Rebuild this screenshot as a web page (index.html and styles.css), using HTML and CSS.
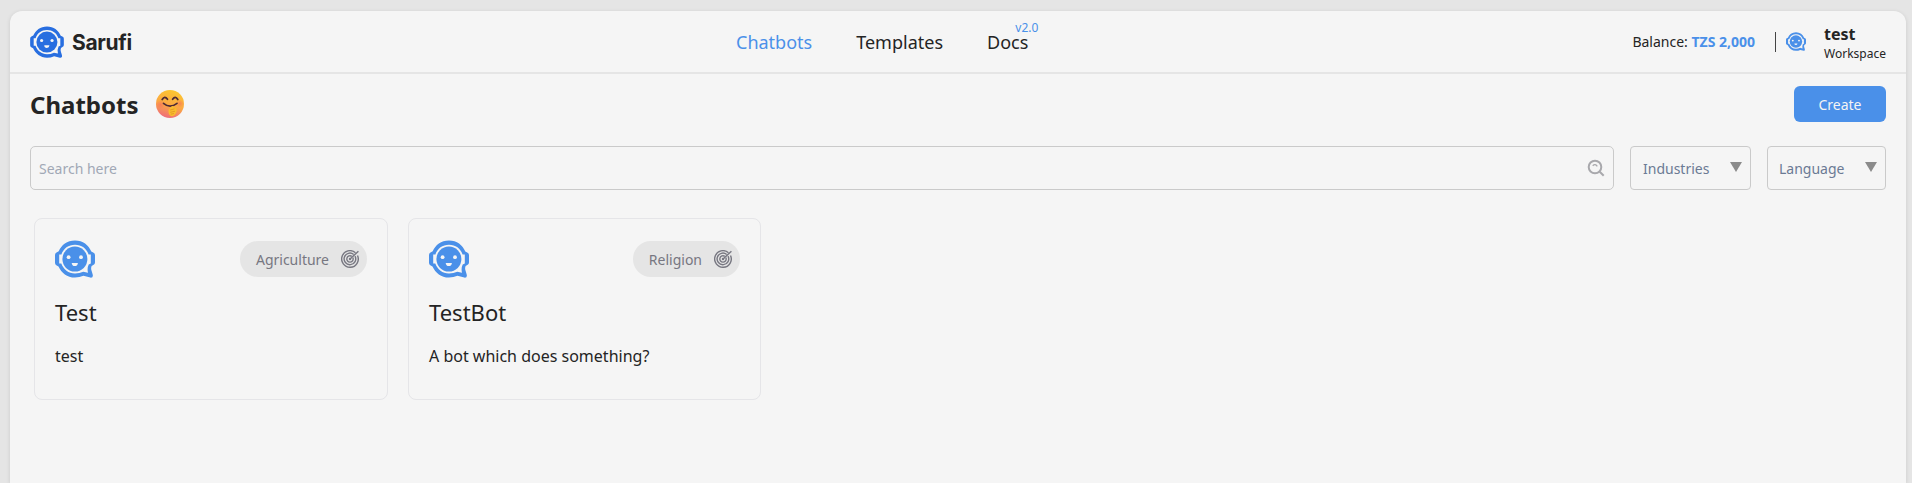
FILE: index.html
```
<!DOCTYPE html>
<html lang="en">
<head>
<meta charset="utf-8">
<title>Sarufi</title>
<link rel="stylesheet" href="styles.css">
</head>
<body>
<svg class="defs" aria-hidden="true">
  <symbol id="bot" viewBox="0 0 40 38">
    <path fill="currentColor" d="M20 .5C28 .5 33.500 5 36.300 11.500L38.200 12.500Q40 13.300 40 15V22.500Q40 24.300 38.300 25L36.600 26Q35.700 28.500 36.500 30.500L37.700 34.500Q38.500 38 35.300 37.600L28.500 35.800Q24.500 37.600 20 37.600C12 37.600 6.500 33 3.500 26.500L1.300 25.200Q0 24.500 0 22.800V15Q0 13.300 1.500 12.500L3.700 11.300C6.500 5 12 .5 20 .5Z"/>
    <path fill="#f5f5f5" d="M20 4.700C26.500 4.700 31.500 8.300 33.600 14.500H35.800V23.400L33.700 24.400Q31.900 28 33 32.800L28.300 31.700Q24.500 33.500 20 33.500C13.500 33.500 8.500 29.500 6.300 23.500H4.200V14.500H6.400C8.500 8.300 13.500 4.700 20 4.700Z"/>
    <circle cx="19.900" cy="19.100" r="12.500" fill="currentColor"/>
    <circle cx="13.600" cy="17.200" r="1.900" fill="#f5f5f5"/>
    <circle cx="26" cy="17.200" r="1.900" fill="#f5f5f5"/>
    <path fill="#f5f5f5" d="M16.700 23H22.900Q22.700 26.100 19.800 26.100T16.700 23Z"/>
  </symbol>
  <symbol id="target" viewBox="0 0 18 18">
    <g fill="none" stroke="currentColor" stroke-width="1.400">
      <path d="M16.500 5.500A8.300 8.300 0 1 1 14.500 2.800"/>
      <path d="M14 6.100A5.800 5.800 0 1 1 12.700 4.500"/>
      <path d="M11.900 7.600A3.200 3.200 0 1 1 10.800 6.300"/>
      <path d="M8.600 9.400L17.400 1.200"/>
      <circle cx="9" cy="9" r=".5"/>
    </g>
  </symbol>
</svg>

<div class="panel">
  <header class="header">
    <div class="brand"><svg class="brand-icon"><use href="#bot"/></svg><span>Sarufi</span></div>
    <nav class="nav">
      <a class="active">Chatbots</a>
      <a>Templates</a>
      <a class="docs">Docs</a>
      <span class="version">v2.0</span>
    </nav>
    <div class="account">
      <div class="balance">Balance: <b>TZS 2,000</b></div>
      <div class="divider"></div>
      <svg class="avatar"><use href="#bot"/></svg>
      <div class="workspace"><strong>test</strong><span>Workspace</span></div>
    </div>
  </header>

  <main class="main">
    <div class="title-row">
      <h1>Chatbots</h1>
      <svg class="emoji" viewBox="0 0 28 28">
        <defs>
          <linearGradient id="skin" x1=".65" y1="0" x2=".35" y2="1">
            <stop offset="0" stop-color="#fcc72f"/><stop offset=".55" stop-color="#fba744"/><stop offset="1" stop-color="#ee6a7c"/>
          </linearGradient>
          <radialGradient id="blush"><stop offset="0" stop-color="#f76a62" stop-opacity=".6"/><stop offset="1" stop-color="#f76a62" stop-opacity="0"/></radialGradient>
        </defs>
        <circle cx="14" cy="14" r="14" fill="url(#skin)"/>
        <circle cx="4.500" cy="14.500" r="4.500" fill="url(#blush)"/>
        <circle cx="24" cy="13.500" r="4" fill="url(#blush)"/>
        <g fill="none" stroke="#4d2a35" stroke-width="1.700" stroke-linecap="round">
          <path d="M6.200 9.500Q8.700 5.300 11.500 9.300M16.600 9.300Q19.300 5.300 21.800 9.500"/>
          <path d="M7.500 13.300Q14 18.800 21 13.300"/>
        </g>
        <path d="M15.500 16.500Q17 15 18 17.200L20.300 18.300Q21.300 20 20.300 22.500Q18.800 26 15.700 26.300Q13 25.800 12.600 22.500Q12.200 19 14 18.500Z" fill="#f9bd2c"/>
        <path d="M14.200 20L18.500 18.800M14.200 22.300L19 21.200M14.800 24.200L18 23.500" stroke="#dc8d22" stroke-width=".7"/>
      </svg>
      <button class="create">Create</button>
    </div>

    <div class="filters">
      <div class="search">
        <span>Search here</span>
        <svg class="search-icon" viewBox="0 0 18 18"><g fill="none" stroke="#a8a8ac" stroke-width="2"><circle cx="8" cy="8" r="6.300"/><path d="M12.700 12.700L16.700 16.700"/><path d="M5.700 6.700Q8.200 4.400 10.300 7.300" stroke-width="1.300"/></g></svg>
      </div>
      <div class="select industries"><span>Industries</span><i></i></div>
      <div class="select language"><span>Language</span><i></i></div>
    </div>

    <div class="cards">
      <article class="card">
        <div class="card-top"><svg class="card-icon"><use href="#bot"/></svg><div class="tag"><span>Agriculture</span><svg><use href="#target"/></svg></div></div>
        <h2>Test</h2>
        <p>test</p>
      </article>
      <article class="card">
        <div class="card-top"><svg class="card-icon"><use href="#bot"/></svg><div class="tag"><span>Religion</span><svg><use href="#target"/></svg></div></div>
        <h2>TestBot</h2>
        <p>A bot which does something?</p>
      </article>
    </div>
  </main>
</div>
</body>
</html>
```
FILE: styles.css
```
* { box-sizing: border-box; }
body {
  margin: 0;
  height: 483px;
  overflow: hidden;
  padding: 11px 6px 0 10px;
  background: #e5e5e5;
  color: #242424;
  font-family: "Noto Sans", sans-serif;
  font-size: 14px;
}
svg { display: block; flex: none; }
.defs { display: none; }
.panel {
  height: 472px;
  background: #f5f5f5;
  border-radius: 12px 12px 0 0;
  box-shadow: 0 1px 4px rgba(0, 0, 0, .12);
}
.header {
  height: 63px;
  padding: 0 20px;
  display: flex;
  justify-content: space-between;
  align-items: center;
  border-bottom: 2px solid #e5e5e5;
}
.brand {
  display: flex;
  align-items: center;
  gap: 8px;
  font: 700 21px/30px Inter, sans-serif;
  letter-spacing: -.3px;
}
.brand span { padding-top: 2px; }
.brand-icon { width: 34px; height: 32px; color: #286ee0; }
.nav { display: flex; gap: 44px; margin-left: 10px; font-size: 18px; line-height: 28px; }
.nav .active { color: #4a90e9; }
.version { margin: -8px 0 0 -57px; font-size: 12px; line-height: 16px; color: #4a90e9; }
.account { display: flex; align-items: center; justify-content: flex-end; }
.balance b { color: #4a90e9; font-weight: 700; }
.divider { width: 1px; height: 20px; margin: 0 10px 0 20px; background: #444; }
.avatar { width: 20px; height: 19px; margin-right: 18px; color: #4a90e9; }
.workspace { display: flex; flex-direction: column; margin-top: 2px; }
.workspace strong { font-size: 16px; line-height: 23px; }
.workspace span { font-size: 12px; line-height: 16px; }
.main { padding: 12px 20px; }
.title-row { display: flex; align-items: center; height: 36px; }
h1 { margin: 0; padding-top: 2px; font-size: 24px; line-height: 36px; font-weight: 700; }
.emoji { width: 28px; height: 28px; margin-left: 18px; }
.create {
  width: 92px;
  height: 36px;
  margin-left: auto;
  border: 0;
  border-radius: 6px;
  background: #4a90e9;
  color: #f4f4f4;
  font: 14px "Noto Sans", sans-serif;
}
.filters { display: flex; gap: 16px; margin-top: 24px; }
.search, .select {
  height: 44px;
  display: flex;
  align-items: center;
  justify-content: space-between;
  border: 1px solid #cacaca;
}
.search { flex: 1; padding: 0 8px; border-radius: 5px; color: #a1a8b5; }
.search-icon { width: 18px; height: 18px; }
.select { padding: 0 8px 0 12px; border-radius: 4px; color: #6b7a94; }
.select i { width: 12px; height: 10px; margin-bottom: 2px; background: #8b8b8b; clip-path: polygon(0 0, 100% 0, 50% 100%); }
.industries { width: 121px; }
.language { width: 119px; padding-left: 11px; }
.cards { display: flex; gap: 20px; padding: 28px 4px; }
.card {
  width: 354px;
  height: 182px;
  padding: 21px 20px;
  border: 1px solid #e5e5e8;
  border-radius: 8px;
}
.card:last-child { width: 353px; }
.card-top { display: flex; align-items: center; justify-content: space-between; height: 38px; }
.card-icon { width: 40px; height: 38px; color: #4a90e9; }
.tag {
  display: flex;
  align-items: center;
  gap: 12px;
  height: 36px;
  padding: 0 8px 0 16px;
  border-radius: 18px;
  background: #e5e5e5;
  color: #777781;
}
.tag svg { width: 18px; height: 18px; }
h2 { margin: 18px 0 0; font-size: 22px; line-height: 32px; font-weight: 400; }
p { margin: 16px 0 0; font-size: 16px; line-height: 24px; }
```
